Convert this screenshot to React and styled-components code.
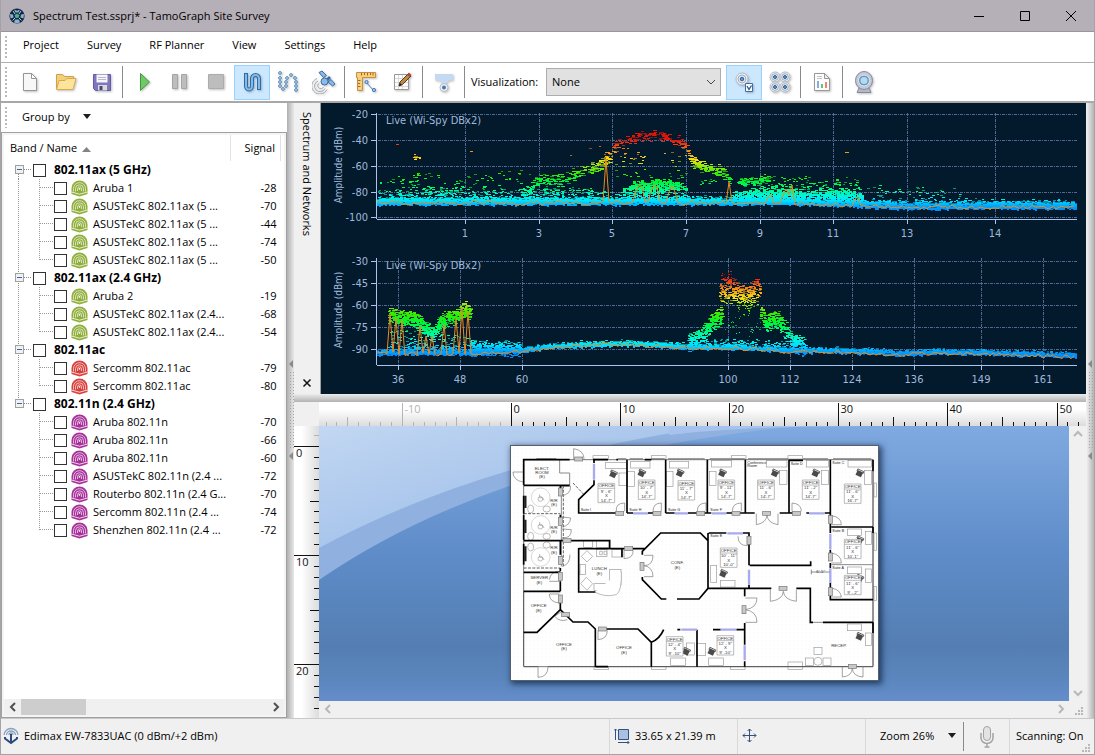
import React, { useState } from "react";
import styled, { createGlobalStyle, css } from "styled-components";

const networks = [
  {
    band: "802.11ax (5 GHz)",
    color: "#8fae3a",
    items: [
      ["Aruba 1", -28],
      ["ASUSTekC 802.11ax (5 ...", -70],
      ["ASUSTekC 802.11ax (5 ...", -44],
      ["ASUSTekC 802.11ax (5 ...", -74],
      ["ASUSTekC 802.11ax (5 ...", -50],
    ],
  },
  {
    band: "802.11ax (2.4 GHz)",
    color: "#8fae3a",
    items: [
      ["Aruba 2", -19],
      ["ASUSTekC 802.11ax (2.4...", -68],
      ["ASUSTekC 802.11ax (2.4...", -54],
    ],
  },
  {
    band: "802.11ac",
    color: "#d8403c",
    items: [
      ["Sercomm 802.11ac", -79],
      ["Sercomm 802.11ac", -80],
    ],
  },
  {
    band: "802.11n (2.4 GHz)",
    color: "#a8309a",
    items: [
      ["Aruba 802.11n", -70],
      ["Aruba 802.11n", -66],
      ["Aruba 802.11n", -60],
      ["ASUSTekC 802.11n (2.4 ...", -72],
      ["Routerbo 802.11n (2.4 G...", -70],
      ["Sercomm 802.11n (2.4 ...", -74],
      ["Shenzhen 802.11n (2.4 ...", -72],
    ],
  },
];

/* ---------- spectrum data ---------- */

const stops = [
  [-96, 0, 130, 245],
  [-91, 0, 165, 255],
  [-87, 0, 225, 255],
  [-83, 0, 245, 215],
  [-78, 0, 250, 130],
  [-72, 0, 245, 50],
  [-66, 50, 235, 0],
  [-60, 150, 230, 10],
  [-55, 250, 225, 20],
  [-49, 245, 150, 20],
  [-44, 240, 70, 20],
  [-40, 225, 20, 10],
  [-20, 225, 20, 10],
];

const dbmColor = (dbm) => {
  const v = Math.max(-96, Math.min(-21, dbm));
  const i = Math.max(1, stops.findIndex((s) => s[0] >= v));
  const a = stops[i - 1];
  const b = stops[i];
  const t = (v - a[0]) / (b[0] - a[0]);
  const c = [1, 2, 3].map((k) => Math.round(a[k] + (b[k] - a[k]) * t));
  return `rgb(${c.join(",")})`;
};

const makeRandom = (seed) => {
  let s = seed;
  return () => {
    s = (s * 16807) % 2147483647;
    return s / 2147483647;
  };
};

// y of a polyline [[x, y], ...] at x
const at = (pts, x) => {
  for (let i = 1; i < pts.length; i++) {
    if (x <= pts[i][0]) {
      const [x0, y0] = pts[i - 1];
      const [x1, y1] = pts[i];
      return y0 + ((y1 - y0) * (x - x0)) / (x1 - x0);
    }
  }
  return pts[pts.length - 1][1];
};

const buildDots = (chart) => {
  const rnd = makeRandom(chart.seed);
  const paths = {};
  const put = (x, y, w, dim) => {
    const key = `${Math.round(y)}|${dim ? 0.6 : 1}`;
    paths[key] = (paths[key] || "") + `M${Math.round(x)} ${Math.round(y)}h${w}v1h-${w}z`;
  };
  chart.clouds.forEach(({ pts, spread, count, w = 3, dim = 0.4 }) => {
    const x0 = pts[0][0];
    const x1 = pts[pts.length - 1][0];
    for (let i = 0; i < count; i++) {
      const x = x0 + rnd() * (x1 - x0);
      const y = at(pts, x) + (rnd() + rnd() - 1) * spread;
      put(x, y, rnd() > 0.6 ? w : w - 1, rnd() < dim);
    }
  });
  // areas get thinner towards their upper edge
  (chart.areas || []).forEach(({ top, bottom, density }) => {
    const x1 = top[top.length - 1][0];
    for (let x = top[0][0]; x < x1; x += 2) {
      const t = at(top, x) + (rnd() - 0.5) * 4;
      for (let y = t; y < bottom; y++) {
        if (rnd() < density) put(x, y, 3, rnd() < 0.15);
      }
    }
  });
  const { pts, thick } = chart.floor;
  for (let x = 56; x < 755; x += 2) {
    const mid = at(pts, x);
    const up = mid - thick - rnd() * 2;
    const low = mid + thick + rnd() * 2 - 1;
    for (let y = up; y < low; y++) put(x, y, 2, y < up + 1 || rnd() < 0.06);
  }
  return Object.entries(paths).map(([key, d]) => {
    const [y, opacity] = key.split("|");
    return { d, opacity, fill: dbmColor(chart.toDbm(Number(y))) };
  });
};

const buildTrace = (chart) => {
  const rnd = makeRandom(chart.seed + 5);
  let d = "";
  for (let x = 57; x < 755; x += 3) {
    const peak = chart.peaks.find((p) => Math.abs(p[0] - x) <= p[2]);
    let y = at(chart.floor.pts, x) + 1 + (rnd() - 0.5) * 4;
    if (peak) y = peak[1] + Math.abs(peak[0] - x) * 2;
    d += `${d ? "L" : "M"}${x} ${y.toFixed(1)}`;
  }
  return d;
};

const band24 = {
  seed: 4211,
  height: 145,
  toDbm: (y) => -20 - ((y - 11) * 80) / 103,
  top: 10,
  axis: 116,
  yTicks: [[-20, 11], [-40, 37], [-60, 63], [-80, 89], [-100, 114]],
  xTicks: [[1, 144], [3, 218], [5, 291], [7, 365], [9, 439], [11, 512], [13, 586], [14, 674]],
  floor: { pts: [[56, 99], [470, 99], [550, 102], [590, 103], [756, 103]], thick: 3 },
  peaks: [[285, 56, 2], [319, 80, 4], [334, 80, 4], [351, 83, 3], [408, 79, 2], [449, 90, 3], [465, 86, 3], [471, 82, 2], [536, 92, 3], [154, 95, 2]],
  clouds: [
    { pts: [[290, 45], [302, 39], [316, 33], [326, 32], [336, 32], [352, 36], [366, 42]], spread: 7, count: 150, w: 4 },
    { pts: [[283, 55], [290, 56]], spread: 8, count: 44 },
    { pts: [[210, 79], [236, 77], [252, 72], [269, 65], [283, 59]], spread: 8, count: 170, w: 4 },
    { pts: [[57, 80], [210, 76]], spread: 12, count: 80 },
    { pts: [[57, 91], [290, 91]], spread: 7, count: 330 },
    { pts: [[57, 95], [290, 95]], spread: 2, count: 300 },
    { pts: [[92, 53], [98, 56]], spread: 5, count: 9 },
    { pts: [[92, 74], [98, 76]], spread: 10, count: 12 },
    { pts: [[200, 88], [212, 88]], spread: 6, count: 40 },
    { pts: [[212, 88], [270, 86]], spread: 6, count: 40 },
    { pts: [[102, 86], [122, 90], [140, 88]], spread: 6, count: 40 },
    { pts: [[294, 55], [366, 56]], spread: 12, count: 30 },
    { pts: [[294, 72], [366, 72]], spread: 5, count: 20 },
    { pts: [[366, 52], [372, 59], [379, 63], [392, 65], [402, 70], [408, 77]], spread: 7, count: 160, w: 4 },
    { pts: [[378, 78], [410, 80]], spread: 5, count: 14 },
    { pts: [[416, 79], [447, 77]], spread: 5, count: 90, w: 4 },
    { pts: [[440, 78], [540, 84]], spread: 10, count: 90 },
    { pts: [[540, 87], [640, 92]], spread: 9, count: 50 },
    { pts: [[540, 98], [750, 99]], spread: 4, count: 220 },
    { pts: [[366, 96], [410, 97]], spread: 5, count: 100 },
    { pts: [[74, 41], [76, 41]], spread: 0, count: 2 },
    { pts: [[147, 48], [149, 48]], spread: 0, count: 2 },
    { pts: [[244, 54], [278, 42]], spread: 2, count: 3 },
    { pts: [[523, 49], [525, 49]], spread: 0, count: 2 },
  ],
  areas: [
    { top: [[294, 93], [302, 87], [309, 81], [319, 78], [327, 81], [332, 77], [346, 76], [356, 80], [366, 84]], bottom: 87, density: 0.85 },
    { top: [[290, 95], [302, 87], [326, 87], [346, 88], [366, 92]], bottom: 98, density: 0.5 },
    { top: [[408, 94], [414, 90], [446, 87], [469, 88], [496, 90], [512, 87], [536, 90], [544, 97]], bottom: 98, density: 0.8 },
    { top: [[410, 90], [446, 82], [469, 83], [496, 86], [512, 83], [536, 89]], bottom: 90, density: 0.35 },
  ],
};

const band5 = {
  seed: 977,
  height: 146,
  toDbm: (y) => -30 - ((y - 13) * 60) / 88,
  top: 10,
  axis: 117,
  yTicks: [[-30, 13], [-45, 35], [-60, 57], [-75, 79], [-90, 101]],
  xTicks: [[36, 77], [48, 139], [60, 201], [100, 407], [112, 469], [124, 531], [136, 593], [149, 660], [161, 722]],
  floor: {
    pts: [[56, 105], [150, 105], [201, 102], [236, 98], [289, 96], [316, 96], [366, 99], [412, 99], [469, 103], [516, 103], [582, 106], [617, 104], [659, 105], [756, 108]],
    thick: 2,
  },
  peaks: [[69, 66, 1], [75, 70, 1], [81, 72, 1], [99, 78, 1], [106, 86, 1], [111, 88, 1], [123, 76, 1], [135, 70, 1], [141, 60, 2], [147, 64, 1]],
  clouds: [
    { pts: [[67, 67], [79, 69], [96, 72], [102, 79], [111, 86], [117, 77], [126, 69], [136, 68], [142, 61], [149, 64]], spread: 9, count: 900, w: 3, dim: 0.2 },
    { pts: [[68, 92], [148, 92]], spread: 14, count: 130 },
    { pts: [[66, 101], [150, 101]], spread: 5, count: 160 },
    { pts: [[149, 100], [200, 101]], spread: 9, count: 460 },
    { pts: [[398, 47], [438, 47]], spread: 9, count: 210, dim: 0.5 },
    { pts: [[398, 39], [408, 34], [416, 40], [428, 44], [434, 34], [439, 40]], spread: 8, count: 150, w: 3 },
    { pts: [[400, 32], [412, 28]], spread: 9, count: 18, w: 2 },
    { pts: [[416, 58], [430, 54]], spread: 14, count: 70, w: 2 },
    { pts: [[392, 75], [440, 75]], spread: 26, count: 40, w: 2 },
    { pts: [[366, 97], [376, 90], [386, 82], [394, 70], [400, 68]], spread: 11, count: 400, w: 3, dim: 0.25 },
    { pts: [[439, 63], [444, 75], [456, 71], [466, 84], [472, 95], [484, 99]], spread: 11, count: 430, w: 3, dim: 0.25 },
    { pts: [[380, 96], [470, 97]], spread: 6, count: 190 },
    { pts: [[200, 100], [240, 96], [300, 94], [366, 97]], spread: 4, count: 160 },
    { pts: [[470, 100], [600, 103], [756, 105]], spread: 3, count: 260 },
  ],
};

[band24, band5].forEach((chart) => {
  chart.dots = buildDots(chart);
  chart.trace = buildTrace(chart);
});

function SpectrumChart({ chart }) {
  return (
    <ChartSvg viewBox={`0 0 765 ${chart.height}`}>
      <g stroke="#4f6a94" strokeDasharray="3 1 1 1" shapeRendering="crispEdges">
        {chart.yTicks.map(([v, y]) => (
          <line key={v} x1="57" x2="756" y1={y + 0.5} y2={y + 0.5} />
        ))}
        {chart.xTicks.map(([v, x]) => (
          <line key={v} x1={x + 0.5} x2={x + 0.5} y1={chart.top} y2={chart.axis} />
        ))}
      </g>
      <g stroke="#a9c4f0" shapeRendering="crispEdges">
        <line x1="55.5" x2="55.5" y1={chart.top} y2={chart.axis} />
        <line x1="56" x2="756" y1={chart.axis + 0.5} y2={chart.axis + 0.5} />
        {chart.yTicks.map(([v, y]) => (
          <line key={v} x1="50" x2="56" y1={y + 0.5} y2={y + 0.5} />
        ))}
        {chart.xTicks.map(([v, x]) => (
          <line key={v} x1={x + 0.5} x2={x + 0.5} y1={chart.axis} y2={chart.axis + 5} />
        ))}
      </g>
      <g shapeRendering="crispEdges">
        {chart.dots.map((p, i) => (
          <path key={i} d={p.d} fill={p.fill} opacity={p.opacity} />
        ))}
      </g>
      <path d={chart.trace} fill="none" stroke="#f08a1c" strokeWidth="1" />
      <ChartText x="65" y="21">Live (Wi-Spy DBx2)</ChartText>
      {chart.yTicks.map(([v, y]) => (
        <ChartText key={v} x="47" y={y + 4} textAnchor="end">{v}</ChartText>
      ))}
      {chart.xTicks.map(([v, x]) => (
        <ChartText key={v} x={x} y={chart.axis + 18} textAnchor="middle">{v}</ChartText>
      ))}
      <AxisTitle transform="translate(21 62) rotate(-90)">Amplitude (dBm)</AxisTitle>
    </ChartSvg>
  );
}

/* ---------- icons ---------- */

const Globe = () => (
  <svg width="16" height="16" viewBox="0 0 16 16">
    <circle cx="8" cy="8" r="7.6" fill="#14233f" />
    <path d="M5 1.5l3 1.3 3-1.3-1.4 3H6.4zM1 6l3 .5L4.6 9.5 1.5 10.5zM15 6l-3 .5-.6 3 3.100 1zM5 14.500l1-3h4l1 3-3 .8z" fill="#86b4d2" />
    <path d="M8 5.500l2.500 1.500-1 3h-3l-1-3z" fill="#4cae86" />
    <path d="M4 3l2 3M12 3l-2 3M3.500 12.500L6 10M12.500 12.500L10 10" stroke="#b7d2e6" />
  </svg>
);

const NewIcon = () => (
  <svg width="24" height="24" viewBox="0 0 24 24">
    <path d="M5.500 3.500h8l5 5v12h-13z" fill="#f7f7f7" stroke="#959595" />
    <path d="M13.500 3.500v5h5z" fill="#fff" stroke="#959595" />
  </svg>
);

const OpenIcon = () => (
  <svg width="24" height="24" viewBox="0 0 24 24">
    <path d="M2.500 19V4.500h6l2 2h9V11" fill="#f2cf7c" stroke="#d2a04a" />
    <path d="M2.500 19.500L5 10.500h6l2-2h9l-3 11z" fill="#fde49b" stroke="#d9a94f" />
  </svg>
);

const SaveIcon = () => (
  <svg width="24" height="24" viewBox="0 0 24 24">
    <path d="M3.500 4.500h17v16h-15l-2-2z" fill="#7f76bd" stroke="#655d9f" />
    <path d="M6.500 4.500h11v8h-11z" fill="#f5f5fa" />
    <path d="M8 7.500h8M8 9.500h8" stroke="#b9b9cc" />
    <path d="M8 15h9v5.500H8z" fill="#d9d9e2" />
    <path d="M9.500 16h3v4h-3z" fill="#4a4670" />
  </svg>
);

const PlayIcon = () => (
  <svg width="24" height="24" viewBox="0 0 24 24">
    <path d="M8.500 3.500l9 8.500-9 8.500z" fill="#6fca66" stroke="#43953d" />
  </svg>
);

const PauseIcon = () => (
  <svg width="24" height="24" viewBox="0 0 24 24">
    <path d="M4.500 4.500h5v14h-5zM13.500 4.500h5v14h-5z" fill="#bdbdbd" stroke="#a5a5a5" />
  </svg>
);

const StopIcon = () => (
  <svg width="24" height="24" viewBox="0 0 24 24">
    <path d="M4.500 4.500h15v14h-15z" fill="#bdbdbd" stroke="#acacac" />
  </svg>
);

const PathIcon = () => (
  <svg width="24" height="24" viewBox="0 0 24 24" fill="none">
    <path d="M6 3v13a3 3.500 0 0 0 6 0V8.500a3.500 3.500 0 0 1 7 0V20" stroke="#2f6aa5" strokeWidth="4" />
    <path d="M6 4v12a3 3.500 0 0 0 6 0V8.500a3.500 3.500 0 0 1 7 0V19" stroke="#86bae6" strokeWidth="2" />
  </svg>
);

const DotsIcon = () => (
  <svg width="24" height="24" viewBox="0 0 24 24" fill="#c3dbf2" stroke="#4c7fb3" strokeWidth=".9">
    {[[4, 3], [4, 8], [4, 12], [4, 16], [7, 19], [10, 16], [10, 12], [11, 8], [15, 5], [19, 8], [20, 12], [20, 16], [20, 20]].map(([x, y]) => (
      <circle key={`${x}-${y}`} cx={x} cy={y} r="1.400" />
    ))}
  </svg>
);

const SatelliteIcon = () => (
  <svg width="24" height="24" viewBox="0 0 24 24" fill="none">
    <g stroke="#a4a9ae">
      <path d="M5 8.500a8 8 0 1 0 10 11" />
      <path d="M6 11a5.500 5.500 0 1 0 7 7.500" />
      <path d="M7.500 13a3 3 0 1 0 4 4" />
    </g>
    <path d="M7 2.500l3-1.500 4.500 4.500-3 2zM16 12l3-2.500 4 4.500-2.500 2z" fill="#8db8e2" stroke="#3b6ea5" />
    <path d="M11 14l7-7" stroke="#3b6ea5" strokeWidth="3" />
    <circle cx="12.500" cy="11.500" r="3.500" fill="#8bbce9" stroke="#3b6ea5" />
  </svg>
);

const RulerIcon = () => (
  <svg width="24" height="24" viewBox="0 0 24 24" fill="none">
    <path d="M2.500 2.500h19v5h-13v13h-5v-13h-1z" fill="#f7cf7d" stroke="#c79040" />
    <path d="M7.500 3v2.500M10.500 3v2M13.500 3v2.500M16.500 3v2M19 3v2.500M4 10.500h2.500M4 13.500h2M4 16.500h2.500" stroke="#9a6a28" />
    <path d="M12.500 12.500l7 8" stroke="#4a7fb8" />
    <circle cx="12.500" cy="12" r="1.600" fill="#a9cdf0" stroke="#3f76b0" />
    <circle cx="20" cy="20" r="1.600" fill="#a9cdf0" stroke="#3f76b0" />
  </svg>
);

const EditIcon = () => (
  <svg width="24" height="24" viewBox="0 0 24 24">
    <path d="M4.500 4.500h14v15h-14z" fill="#fff" stroke="#9a9a9a" />
    <path d="M5 8.500h13M5 12.500h13M5 16.500h13M8.500 5v14M12.500 5v14" stroke="#d8d8d8" />
    <path d="M9 16l1-4 8.500-8.500 2.500 2.500-8.500 8.500z" fill="#c08a45" stroke="#5b3a1e" />
    <path d="M17 5l2-2.500 2.500 2.500-2 2z" fill="#a8503a" />
    <path d="M9 16l1-3 2 2z" fill="#222" />
  </svg>
);

const ProbeIcon = () => (
  <svg width="24" height="24" viewBox="0 0 24 24">
    <path d="M3 4h18v6.500h-4L12 15.500 7 10.500H3z" fill="#c4daf4" />
    <circle cx="12" cy="17.500" r="4" fill="#eef0f3" stroke="#b5bcc6" />
    <circle cx="12" cy="17.500" r="2" fill="#4c78aa" />
  </svg>
);

const Rings = ({ x, y, r }) => (
  <g fill="none">
    <circle cx={x} cy={y} r={r} stroke="#b3bbc4" fill="#eef1f5" />
    <circle cx={x} cy={y} r={r * 0.66} stroke="#9aabbd" />
    <circle cx={x} cy={y} r={r * 0.3} fill="#5e93c8" stroke="#2f5f95" />
  </g>
);

const ApCheckIcon = () => (
  <svg width="24" height="24" viewBox="0 0 24 24">
    <Rings x={10} y={9} r={6} />
    <path d="M13.500 13.500h7v8h-7z" fill="#fff" stroke="#3f6ea6" />
    <path d="M15 16l2 3.500 2.500-4" fill="none" stroke="#2e5f9a" strokeWidth="1.400" />
  </svg>
);

const ApGridIcon = () => (
  <svg width="24" height="24" viewBox="0 0 24 24">
    <Rings x={7} y={7} r={5} />
    <Rings x={17} y={7} r={5} />
    <Rings x={7} y={17} r={5} />
    <Rings x={17} y={17} r={5} />
  </svg>
);

const ReportIcon = () => (
  <svg width="24" height="24" viewBox="0 0 24 24">
    <path d="M4.500 3.500h10l5 5v12h-15z" fill="#fcfcfc" stroke="#989898" />
    <path d="M14.500 3.500v5h5z" fill="#eee" stroke="#989898" />
    <path d="M7 6.500h5M7 8.500h5" stroke="#c4c4c4" />
    <path d="M7 11h2v7H7z" fill="#7fb0e0" />
    <path d="M11 14h2v4h-2z" fill="#6cc06c" />
    <path d="M15 12h2v6h-2z" fill="#ec8080" />
  </svg>
);

const CameraIcon = () => (
  <svg width="24" height="24" viewBox="0 0 24 24">
    <path d="M7 18h10l2 4.500H5z" fill="#b5bac6" stroke="#858b9c" />
    <ellipse cx="12" cy="10.500" rx="8.500" ry="9" fill="#c3c9da" stroke="#858b9c" />
    <circle cx="12" cy="10.500" r="5.500" fill="#7d92b8" stroke="#e4e8f0" />
    <circle cx="12" cy="10.500" r="3.500" fill="#a5e0f5" />
  </svg>
);

const ApIcon = ({ color }) => (
  <svg width="17" height="17" viewBox="0 0 17 17" fill="none">
    <path d="M0.500 14V8a8 7.500 0 0 1 16 0v6l-8 2.500z" fill={color} />
    <path
      d="M2.500 11.500V8.500a6 5.800 0 0 1 12 0v3M4.500 11.500V8.700a4 3.900 0 0 1 8 0v2.800M6.500 11V8.800a2 2 0 0 1 4 0V11"
      stroke="#fff"
      strokeOpacity=".8"
      strokeWidth=".8"
    />
    <path d="M0.500 12l8 2.200 8-2.200" stroke="#fff" strokeWidth=".8" />
    <circle cx="8.500" cy="8.800" r=".9" fill="#fff" />
  </svg>
);

const Chevron = ({ dir, color = "#505050" }) => {
  const d = {
    left: "M8 2L4 6l4 4",
    right: "M4 2l4 4-4 4",
    up: "M2 8l4-4 4 4",
    down: "M2 4l4 4 4-4",
  }[dir];
  return (
    <svg width="12" height="12" viewBox="0 0 12 12">
      <path d={d} fill="none" stroke={color} strokeWidth="2" />
    </svg>
  );
};

const Caret = () => (
  <svg width="8" height="5" viewBox="0 0 8 5">
    <path d="M0 0h8L4 5z" fill="#1e1e1e" />
  </svg>
);

const SizeGrip = () => (
  <svg width="9" height="9" viewBox="0 0 9 9" fill="#b8b8b8">
    <path d="M6 0h2v2H6zM3 3h2v2H3zM6 3h2v2H6zM0 6h2v2H0zM3 6h2v2H3zM6 6h2v2H6z" />
  </svg>
);

const AdapterIcon = () => (
  <svg width="16" height="18" viewBox="0 0 16 18" fill="none">
    <path d="M1 8a7 6.500 0 0 1 14 0M3.500 8a4.500 4 0 0 1 9 0M6 8a2 2 0 0 1 4 0" stroke="#8ba3c0" strokeWidth="1.300" />
    <path d="M8 7v9" stroke="#2c4a7c" strokeWidth="2" />
    <path d="M2 10v1.500L8 16l6-4.500V10" stroke="#2c4a7c" strokeWidth="2" />
  </svg>
);

const AreaIcon = () => (
  <svg width="16" height="16" viewBox="0 0 16 16" fill="none" stroke="#35507e">
    <path d="M4.500 1.500h10v10h-10z" fill="#a8c1e2" />
    <path d="M1.500 1v11M0 2.500L1.500 1 3 2.500M4 14.500h11M13.500 13l1.500 1.500-1.500 1.500" />
  </svg>
);

const MoveIcon = () => (
  <svg width="15" height="15" viewBox="0 0 15 15" fill="none" stroke="#35507e">
    <path d="M7.500 1v13M1 7.500h13M5.500 3l2-2 2 2M5.500 12l2 2 2-2M3 5.500l-2 2 2 2M12 5.500l2 2-2 2" />
  </svg>
);

const MicIcon = () => (
  <svg width="16" height="24" viewBox="0 0 16 24" fill="none" stroke="#a3a3a3">
    <rect x="4.500" y="1.500" width="7" height="14" rx="3.500" fill="#e3e3e3" />
    <path d="M2 8v5a6 5.500 0 0 0 12 0V8M8 18.500V22M5.500 22h5" strokeWidth="1.500" />
  </svg>
);

/* ---------- tree ---------- */

const GroupLines = ({ first, last }) => (
  <svg width="22" height="18" viewBox="0 0 22 18" shapeRendering="crispEdges">
    <path
      d={`M7.500 ${first ? 9 : 0}V${last ? 9 : 18}M13 8.500H21`}
      stroke="#8c8c8c"
      strokeDasharray="1 1"
      fill="none"
    />
    <rect x="4.500" y="4.500" width="8" height="8" fill="#f1f1f1" stroke="#a0a0a0" />
    <path d="M6 8.500h5" stroke="#3a67b0" />
  </svg>
);

const ItemLines = ({ lastGroup, last }) => (
  <svg width="43" height="18" viewBox="0 0 43 18" shapeRendering="crispEdges">
    <path
      d={`${lastGroup ? "" : "M7.500 0V18"}M28.500 0V${last ? 9 : 18}M29 8.500H42`}
      stroke="#9a9a9a"
      strokeDasharray="1 1"
      fill="none"
    />
  </svg>
);

function NetworkTable() {
  return (
    <Table>
      <thead>
        <tr>
          <NameHead scope="col">
            Band / Name{" "}
            <svg width="9" height="5" viewBox="0 0 9 5">
              <path d="M0 5h9L4.500 0z" fill="#848484" />
            </svg>
          </NameHead>
          <SignalHead scope="col">Signal</SignalHead>
        </tr>
      </thead>
      <tbody>
        {networks.map((group, g) => {
          const lastGroup = g === networks.length - 1;
          return (
            <React.Fragment key={group.band}>
              <tr>
                <Cell colSpan="2">
                  <Entry>
                    <GroupLines first={g === 0} last={lastGroup} />
                    <Tick type="checkbox" />
                    <BandName>{group.band}</BandName>
                  </Entry>
                </Cell>
              </tr>
              {group.items.map(([name, signal], i) => (
                <tr key={i}>
                  <Cell>
                    <Entry>
                      <ItemLines lastGroup={lastGroup} last={i === group.items.length - 1} />
                      <Tick type="checkbox" />
                      <IconSlot>
                        <ApIcon color={group.color} />
                      </IconSlot>
                      {name}
                    </Entry>
                  </Cell>
                  <SignalCell>{signal}</SignalCell>
                </tr>
              ))}
            </React.Fragment>
          );
        })}
      </tbody>
    </Table>
  );
}

/* ---------- rulers and plan ---------- */

const METRE = 10.91;

function TopRuler() {
  const ticks = [];
  for (let m = -17; m <= 52; m++) ticks.push(m);
  return (
    <RulerSvg viewBox="0 0 767 24" preserveAspectRatio="xMinYMin slice">
      {ticks.map((m) => {
        const x = Math.round(192 + m * METRE) + 0.5;
        const y = m % 10 === 0 ? 1 : m % 5 === 0 ? 15 : 20;
        return (
          <g key={m}>
            <line x1={x} x2={x} y1={y} y2="24" stroke={m < 0 ? "#b4b4b4" : "#111"} />
            {m % 10 === 0 && (
              <RulerText x={x + 2} y="11" $faint={m < 0}>{m}</RulerText>
            )}
          </g>
        );
      })}
    </RulerSvg>
  );
}

function SideRuler() {
  const ticks = [];
  for (let m = -1; m <= 24; m++) ticks.push(m);
  return (
    <svg width="25" height="291" viewBox="0 0 25 291">
      {ticks.map((m) => {
        const y = Math.round(20 + m * METRE) + 0.5;
        const x = m % 10 === 0 ? 0 : m % 5 === 0 ? 16 : 20;
        return (
          <g key={m}>
            <line x1={x} x2="25" y1={y} y2={y} stroke={m < 0 ? "#b4b4b4" : "#111"} />
            {m % 10 === 0 && <RulerText x="2" y={y + 10}>{m}</RulerText>}
          </g>
        );
      })}
    </svg>
  );
}

const walls = [
  "M57 135V60H195M57 137H195",
  "M57 303H222M57 398H167M57 455H167M167 137V160M167 225V240M167 300V345M167 385V395M167 425V455M167 480V510L97 578H57",
  "M57 168V222M57 225V300M57 312V375",
  "M167 510L205 547H250L272 568V681M272 681H310M305 568H400L440 608V681M440 608Q465 598 477 570",
  "M222 303H315V327M222 325V457H272M222 327H360M385 327H420M352 327V353",
  "M413 345V335L468 280H587L610 303M610 280V446L583 478H517M485 478H470L413 420V412",
  "M268 60V70M268 122V135L222 180V220H335M367 60V220M367 220H385M430 220H450M483 60V220M483 220H510M550 220H608V60",
  "M265 60H310M335 60H340M420 60H440M608 220H620M665 220H685M705 220H750M722 60V220M825 220H853V60M853 62H895M853 220H865M905 220H913M960 220H977M977 60V230M977 253V280M980 262H1105",
  "M612 280H665M715 280H733V290M733 312V377M735 377H918V365M733 435V446H612M733 446H800M875 446H917V548H925M955 548H1105",
  "M977 330V340M977 370V385M977 430V445M977 468V480H1105M1105 262V280M1105 60V95M1105 548V580",
  "M720 446V470M720 550V615M720 665V681M625 570H648M695 570H720M577 570V681M518 570H527",
];

const doors = [
  "M207 60V27Q238 32 238 58M55 127Q25 122 25 97H55M170 168Q198 165 198 140H170M172 232L198 235Q196 258 172 262M172 294Q200 298 200 270L172 268",
  "M134 420Q138 395 165 395M134 425H165M165 490Q134 488 134 463H165M172 380Q196 375 196 345M172 515L150 530Q165 548 188 540",
  "M335 215Q332 190 360 190V215M445 215Q445 190 470 190V215M385 330Q388 356 358 357V330",
  "M418 347H445Q445 378 418 378Q445 382 445 411H418M280 572V600Q308 598 308 572M100 681V713Q130 712 130 681",
  "M578 215Q578 190 604 190V215M683 215Q683 190 710 190V215M755 222V255Q786 250 787 225Q788 250 820 255V222M862 190V215M862 190Q890 192 890 215",
  "M980 228Q1010 232 1010 255H980M980 340Q1010 345 1010 370H980M980 445Q1008 450 1010 472H980M700 290Q700 318 728 318V290",
  "M797 450V485Q835 480 836 455Q838 480 875 485V450M722 475H757Q757 505 722 510Q757 515 757 548H722M1013 681V712Q1042 710 1043 685Q1044 710 1075 712V681",
];

const windows = "M95 57H155M340 57H365M375 57H415M440 57H480M490 57H600M615 57H720M730 57H850M895 57H970M985 57H1100M57 455V680M57 681H100M130 681H1105M1105 95V680M720 446V470M980 375H1105M925 548H955M165 60V100H195V137M170 137V380";

const desks = [
  [302, 68, 64, 18], [343, 100, 22, 38], [378, 65, 58, 20], [369, 95, 20, 45], [494, 65, 58, 20], [485, 95, 20, 45],
  [620, 62, 60, 20], [614, 95, 20, 42], [785, 62, 62, 20], [825, 92, 22, 42], [905, 62, 66, 20], [950, 92, 22, 42],
  [1030, 62, 70, 20], [1080, 92, 20, 42], [1028, 268, 42, 20], [1083, 275, 18, 40], [1028, 382, 42, 20], [1083, 388, 18, 40],
  [618, 378, 18, 50], [647, 422, 44, 20], [498, 655, 44, 22], [545, 610, 24, 36], [612, 655, 44, 22], [575, 612, 28, 36],
  [1028, 553, 42, 20], [1083, 580, 18, 38], [265, 48, 46, 10], [440, 48, 44, 10], [680, 48, 44, 10], [850, 48, 44, 10],
  [268, 680, 44, 10], [440, 680, 44, 10], [677, 680, 44, 10], [850, 667, 44, 22], [1108, 130, 8, 42], [1108, 280, 8, 52],
  [1108, 440, 8, 42], [928, 623, 24, 22], [902, 655, 24, 22], [955, 655, 24, 22], [275, 330, 32, 20], [322, 330, 28, 22],
  [226, 375, 16, 30], [237, 303, 26, 20], [275, 303, 38, 20], [315, 390, 34, 46], [268, 432, 50, 20],
];

const chairs = [
  [325, 105], [410, 102], [525, 102], [652, 102], [810, 102], [932, 102], [1064, 102],
  [1064, 303], [1064, 418], [655, 403], [544, 637], [620, 637], [1064, 592],
];

const officeTags = [
  [305, 160, "9' - 6\"", "14'-7\""],
  [426, 150, "10' - 7\"", "14'-7\""],
  [545, 152, "11' - 7\"", "14'-7\""],
  [665, 150, "9' - 11\"", "14'-7\""],
  [784, 150, "11' - 6\"", "14'-7\""],
  [918, 150, "11' - 2\"", "14'-7\""],
  [1044, 162, "11' - 6\"", "16'-7\""],
  [1044, 328, "11' - 6\"", "10'-1\""],
  [1044, 436, "11' - 6\"", "9' - 2\""],
  [672, 354, "10' - 11\"", "10'-0\""],
  [510, 620, "12' - 4\"", "9' -10\""],
  [662, 617, "12' - 9\"", "9' -10\""],
];

const roomNames = [
  [112, 90, "ELECT.", "ROOM"], [104, 418, "SERVER", "(E)"], [102, 503, "OFFICE", "(E)"], [178, 618, "OFFICE", "(E)"],
  [358, 628, "OFFICE", "(E)"], [284, 391, "LUNCH", "(E)"], [518, 373, "CONF.", "(E)"], [148, 186, "R/R", "(E)"],
  [148, 267, "R/R", "(E)"], [148, 329, "R/R", "(E)"], [1003, 622, "RECEP.", ""],
];

const suiteNames = [
  [228, 214, "Suite I"], [374, 214, "Suite H"], [490, 214, "Suite G"], [617, 214, "Suite F"], [728, 73, "Conference"],
  [728, 83, "Room"], [858, 77, "Suite D"], [983, 73, "Suite C"], [983, 276, "Suite B"], [983, 389, "Suite A"], [617, 292, "Suite E"],
];

const doorTags = [
  [222, 58], [345, 221], [457, 221], [588, 221], [694, 221], [786, 221], [875, 221], [977, 240, 1], [977, 352, 1], [977, 456, 1],
  [733, 302, 1], [835, 446], [718, 510, 1], [1043, 681], [372, 327], [412, 380, 1], [167, 157, 1], [167, 245, 1], [187, 303], [167, 362, 1],
  [167, 410, 1], [167, 478, 1], [293, 568], [183, 525],
];

function FloorPlan() {
  return (
    <PlanSvg viewBox="16 16 1107 708">
      <defs>
        <pattern id="dots" width="12" height="12" patternUnits="userSpaceOnUse">
          <rect x="2" y="2" width="3" height="3" fill="#f0f0f0" />
        </pattern>
      </defs>
      <rect x="16" y="16" width="1107" height="708" fill="#fff" />
      <rect x="16" y="16" width="1107" height="708" fill="url(#dots)" />
      <g fill="#fff" stroke="#9a9a9a" strokeWidth="2">
        {desks.map(([x, y, w, h]) => (
          <rect key={`${x}-${y}`} x={x} y={y} width={w} height={h} />
        ))}
        <g stroke="#c4c4c4">
          <circle cx="108" cy="173" r="28" />
          <circle cx="108" cy="256" r="28" />
          <circle cx="108" cy="352" r="28" />
        </g>
        <circle cx="940" cy="665" r="12" />
        <ellipse cx="126" cy="208" rx="11" ry="9" />
        <ellipse cx="126" cy="290" rx="11" ry="9" />
        <ellipse cx="126" cy="316" rx="11" ry="9" />
        <ellipse cx="78" cy="208" rx="9" ry="12" />
        <ellipse cx="78" cy="290" rx="9" ry="12" />
        <ellipse cx="78" cy="322" rx="9" ry="12" />
        <path d="M230 350L247 333 264 350 247 367zM228 432L245 413 264 432 247 452zM270 457Q300 474 335 465Q352 455 350 395" />
        <path d="M285 335h8v10h-8zM298 335h8v10h-8z" />
      </g>
      <path d={windows} fill="none" stroke="#8a8a8a" strokeWidth="3" />
      <path d="M57 222H167M57 385H167M176 137V380M205 130L238 165" fill="none" stroke="#666" strokeWidth="3" strokeDasharray="9 4" />
      <path d="M57 60H1105V681M57 681H1105M57 137V680M57 60V137" fill="none" stroke="#333" strokeWidth="2" />
      <path d={doors.join("")} fill="none" stroke="#777" strokeWidth="2" />
      <path d={walls.join("")} fill="none" stroke="#000" strokeWidth="5" />
      <path d="M268 72V120M385 221H430M510 221H550M622 221H665M913 221H960M668 281H715M733 390V435M977 282V328M977 386V430M648 570H695M720 617V662M530 570H577" stroke="#a9a9ee" strokeWidth="7" />
      <path d="M62 168V205M62 240V280M62 320V365" stroke="#222" strokeWidth="7" />
      <path d="M920 397H975M920 390V404" stroke="#555" strokeWidth="2" />
      {chairs.map(([x, y]) => (
        <g key={`${x}-${y}`} transform={`translate(${x} ${y}) rotate(25)`}>
          <rect x="-9" y="-8" width="18" height="16" fill="#4a4a4a" />
          <path d="M-10 -4V-11H10V-4" fill="none" stroke="#333" strokeWidth="2" />
        </g>
      ))}
      {doorTags.map(([x, y, tall]) => (
        <rect
          key={`${x}-${y}`}
          x={x - (tall ? 6 : 12)}
          y={y - (tall ? 12 : 6)}
          width={tall ? 12 : 24}
          height={tall ? 24 : 12}
          fill="#c8c8c8"
          stroke="#777"
          strokeWidth="2"
        />
      ))}
      {officeTags.map(([x, y, w, d]) => (
        <g key={`${x}-${y}`}>
          <path d={`M${x - 25} ${y - 29}h50v58h-50zM${x - 25} ${y - 14}h50`} fill="#fff" stroke="#999" strokeWidth="2" />
          <PlanText x={x} y={y - 17}>OFFICE</PlanText>
          <PlanText x={x} y={y - 1}>{w}</PlanText>
          <PlanText x={x} y={y + 12}>X</PlanText>
          <PlanText x={x} y={y + 26}>{d}</PlanText>
        </g>
      ))}
      {roomNames.map(([x, y, a, b]) => (
        <g key={`${x}-${y}`}>
          <PlanText x={x} y={y}>{a}</PlanText>
          <PlanText x={x} y={y + 14}>{b}</PlanText>
        </g>
      ))}
      <PlanText x="112" y="116">(E)</PlanText>
      {[178, 261, 357].map((y) => (
        <g key={y} fill="none" stroke="#999" strokeWidth="2">
          <path d={`M105 ${y - 14}v10h9l4 8`} />
          <circle cx="107" cy={y} r="7" />
        </g>
      ))}
      <PlanText x="948" y="401">6'-5"</PlanText>
      {suiteNames.map(([x, y, s]) => (
        <SuiteText key={s} x={x} y={y}>{s}</SuiteText>
      ))}
    </PlanSvg>
  );
}

const Backdrop = () => (
  <BackdropSvg viewBox="0 0 750 275" preserveAspectRatio="none">
    <defs>
      <linearGradient id="sky" x1="0" y1="0" x2="0" y2="1">
        <stop offset="0" stopColor="#7fa9e0" />
        <stop offset=".45" stopColor="#5f8dc9" />
        <stop offset=".8" stopColor="#547eb3" />
        <stop offset=".92" stopColor="#5b86bd" />
        <stop offset="1" stopColor="#648dcb" />
      </linearGradient>
      <linearGradient id="hazeA" x1="0" y1="0" x2="1" y2="1">
        <stop offset="0" stopColor="#c2d7f2" />
        <stop offset="1" stopColor="#8fb4e6" />
      </linearGradient>
    </defs>
    <rect width="750" height="275" fill="url(#sky)" />
    <path d="M0 0H480Q180 30 0 154z" fill="#90b1e0" />
    <path d="M0 0H395Q160 35 0 122z" fill="url(#hazeA)" />
    <path d="M350 9Q420 0 560 0H350z" fill="#a5c3ee" />
  </BackdropSvg>
);

/* ---------- window ---------- */

export default function App() {
  const [mode, setMode] = useState("path");
  const [visualization, setVisualization] = useState("None");

  return (
    <Window>
      <GlobalStyle />
      <TitleBar>
        <Globe />
        <Title>Spectrum Test.ssprj* - TamoGraph Site Survey</Title>
        <CaptionButton aria-label="Minimize">
          <svg width="12" height="12"><path d="M1 6.500h10" stroke="#000" /></svg>
        </CaptionButton>
        <CaptionButton aria-label="Maximize">
          <svg width="12" height="12"><path d="M1.500 1.500h9v9h-9z" fill="none" stroke="#000" /></svg>
        </CaptionButton>
        <CaptionButton aria-label="Close">
          <svg width="12" height="12"><path d="M1 1l10 10M11 1L1 11" stroke="#000" /></svg>
        </CaptionButton>
      </TitleBar>

      <MenuBar>
        <Grip $tight />
        {["Project", "Survey", "RF Planner", "View", "Settings", "Help"].map((m) => (
          <MenuItem key={m}>{m}</MenuItem>
        ))}
      </MenuBar>

      <ToolBar>
        <Grip />
        <ToolButton aria-label="New"><NewIcon /></ToolButton>
        <ToolButton aria-label="Open"><OpenIcon /></ToolButton>
        <ToolButton aria-label="Save"><SaveIcon /></ToolButton>
        <Divider />
        <ToolButton aria-label="Start"><PlayIcon /></ToolButton>
        <ToolButton aria-label="Pause"><PauseIcon /></ToolButton>
        <ToolButton aria-label="Stop"><StopIcon /></ToolButton>
        <ToolButton aria-label="Continuous" $active={mode === "path"} onClick={() => setMode("path")}><PathIcon /></ToolButton>
        <ToolButton aria-label="Point by point" $active={mode === "dots"} onClick={() => setMode("dots")}><DotsIcon /></ToolButton>
        <ToolButton aria-label="GPS" $active={mode === "gps"} onClick={() => setMode("gps")}><SatelliteIcon /></ToolButton>
        <Divider />
        <ToolButton aria-label="Calibrate"><RulerIcon /></ToolButton>
        <ToolButton aria-label="Edit"><EditIcon /></ToolButton>
        <Divider />
        <ToolButton aria-label="Probe"><ProbeIcon /></ToolButton>
        <Divider />
        <ToolLabel htmlFor="visualization">Visualization:</ToolLabel>
        <SelectBox>
          <Select id="visualization" value={visualization} onChange={(e) => setVisualization(e.target.value)}>
            <option>None</option>
          </Select>
          <SelectArrow width="10" height="6" viewBox="0 0 10 6">
            <path d="M1 1l4 4 4-4" fill="none" stroke="#444" />
          </SelectArrow>
        </SelectBox>
        <ToolButton aria-label="Selected APs" $active><ApCheckIcon /></ToolButton>
        <ToolButton aria-label="All APs"><ApGridIcon /></ToolButton>
        <Divider />
        <ToolButton aria-label="Report"><ReportIcon /></ToolButton>
        <Divider />
        <ToolButton aria-label="Camera"><CameraIcon /></ToolButton>
      </ToolBar>

      <Body>
        <Sidebar>
          <GroupBar>
            <Grip />
            <GroupButton>
              Group by <Caret />
            </GroupButton>
          </GroupBar>
          <ListPanel>
            <NetworkTable />
            <Spacer />
            <ListScroll>
              <ScrollButton aria-label="Scroll left"><Chevron dir="left" /></ScrollButton>
              <Thumb />
              <Spacer />
              <ScrollButton aria-label="Scroll right"><Chevron dir="right" /></ScrollButton>
            </ListScroll>
          </ListPanel>
        </Sidebar>

        <Splitter>
          <SplitHandle>
            <SplitDots />
          </SplitHandle>
        </Splitter>

        <Content>
          <SpectrumRow>
            <SideTab>
              <SideTabTitle>Spectrum and Networks</SideTabTitle>
              <SideTabClose aria-label="Close panel">
                <svg width="10" height="10"><path d="M1.500 1.500l7 7M8.500 1.500l-7 7" stroke="#111" strokeWidth="1.500" /></svg>
              </SideTabClose>
            </SideTab>
            <Charts>
              <SpectrumChart chart={band24} />
              <SpectrumChart chart={band5} />
            </Charts>
          </SpectrumRow>
          <RowSplitter />
          <RulerRow>
            <RulerCorner />
            <TopRuler />
          </RulerRow>
          <MapRow>
            <SideRulerBox>
              <SideRuler />
            </SideRulerBox>
            <MapColumn>
              <MapView>
                <Canvas>
                  <Backdrop />
                  <FloorPlan />
                </Canvas>
                <MapScrollY>
                  <ScrollButton aria-label="Scroll up"><Chevron dir="up" color="#b8b8b8" /></ScrollButton>
                  <Spacer />
                  <ScrollButton aria-label="Scroll down"><Chevron dir="down" color="#b8b8b8" /></ScrollButton>
                </MapScrollY>
              </MapView>
              <MapScrollX>
                <ScrollButton aria-label="Scroll map left"><Chevron dir="left" color="#b8b8b8" /></ScrollButton>
                <Spacer />
                <ScrollButton aria-label="Scroll map right"><Chevron dir="right" color="#b8b8b8" /></ScrollButton>
                <ScrollCorner>
                  <SizeGrip />
                </ScrollCorner>
              </MapScrollX>
            </MapColumn>
          </MapRow>
        </Content>

        <Splitter $right>
          <SplitHandle>
            <SplitDots />
          </SplitHandle>
        </Splitter>
      </Body>

      <StatusBar>
        <StatusItem $grow>
          <AdapterIcon />
          Edimax EW-7833UAC (0 dBm/+2 dBm)
        </StatusItem>
        <StatusItem $width={128}>
          <AreaIcon />
          33.65 x 21.39 m
        </StatusItem>
        <StatusItem $width={128}>
          <MoveIcon />
        </StatusItem>
        <ZoomItem>
          <ZoomButton>
            Zoom 26% <Caret />
          </ZoomButton>
        </ZoomItem>
        <MicItem>
          <MicIcon />
        </MicItem>
        <StatusItem $width={85}>
          Scanning: On
          <GripCorner>
            <SizeGrip />
          </GripCorner>
        </StatusItem>
      </StatusBar>
    </Window>
  );
}

const GlobalStyle = createGlobalStyle`
  * {
    box-sizing: border-box;
  }
  body {
    margin: 0;
    color: #000;
    font: 11px/16px "Open Sans", "Noto Sans", sans-serif;
  }
  button, select, input {
    font: inherit;
    color: inherit;
    margin: 0;
  }
  button {
    border: 0;
    padding: 0;
    background: none;
  }
  svg {
    display: block;
    flex: none;
  }
`;

const Window = styled.div`
  display: flex;
  flex-direction: column;
  min-height: 100vh;
  border: 1px solid #a6a2a8;
  border-top: 0;
  background: #f0f0f0;
`;

const TitleBar = styled.header`
  display: flex;
  align-items: center;
  height: 32px;
  padding-left: 8px;
  background: #b5afb7;
  border-bottom: 1px solid #9a959b;
`;
const Title = styled.h1`
  flex: 1;
  margin: 0 8px;
  font-size: 11px;
  font-weight: 400;
`;
const CaptionButton = styled.button`
  display: grid;
  place-items: center;
  width: 46px;
  height: 30px;
`;

const Grip = styled.span`
  align-self: stretch;
  width: 2px;
  margin: 4px ${(props) => (props.$tight ? 2 : 5)}px 4px 4px;
  background: repeating-linear-gradient(#b9b9b9 0 2px, transparent 2px 4px);
`;

const MenuBar = styled.nav`
  display: flex;
  height: 31px;
  background: #fff;
  border-bottom: 1px solid #b0b0b0;
`;
const MenuItem = styled.button`
  padding: 0 14px 4px;
`;

const ToolBar = styled.div`
  display: flex;
  align-items: center;
  height: 40px;
  background: #fff;
  border-bottom: 2px solid #a8a8a8;
`;
const ToolButton = styled.button`
  display: grid;
  place-items: center;
  width: 36px;
  height: 35px;
  border: 1px solid transparent;
  svg {
    filter: drop-shadow(1px 1px 1px rgba(0, 0, 0, 0.25));
  }
  ${(props) =>
    props.$active &&
    css`
      background: #cce8ff;
      border-color: #99d1ff;
    `}
`;
const Divider = styled.span`
  width: 1px;
  height: 32px;
  margin: 0 3px 0 2px;
  background: #8a8a8a;
`;
const ToolLabel = styled.label`
  width: 75px;
  padding: 0 3px;
`;
const SelectBox = styled.div`
  display: grid;
  align-items: center;
  width: 175px;
  margin: 0 5px 0 3px;
`;
const Select = styled.select`
  grid-area: 1 / 1;
  appearance: none;
  height: 28px;
  padding: 0 5px;
  background: #e1e1e1;
  border: 1px solid #adadad;
  border-radius: 0;
`;
const SelectArrow = styled.svg`
  grid-area: 1 / 1;
  justify-self: end;
  margin-right: 5px;
  pointer-events: none;
`;

const Body = styled.main`
  display: flex;
  flex: 1;
`;
const Sidebar = styled.aside`
  display: flex;
  flex-direction: column;
  width: 286px;
  background: #fff;
`;
const GroupBar = styled.div`
  display: flex;
  height: 29px;
`;
const GroupButton = styled.button`
  display: flex;
  align-items: center;
  gap: 13px;
  padding: 0 10px 2px;
`;
const ListPanel = styled.section`
  display: flex;
  flex-direction: column;
  flex: 1;
  border: 1px solid #a0a0a0;
  box-shadow: inset 0 0 0 2px #f4f4f4;
  padding: 2px;
`;
const Table = styled.table`
  margin-right: 3px;
  border-collapse: collapse;
`;
const NameHead = styled.th`
  height: 26px;
  padding: 0 6px;
  font-weight: 400;
  text-align: left;
  border-right: 1px solid #e2e2e2;
  svg {
    display: inline-block;
    margin-left: 2px;
  }
`;
const SignalHead = styled.th`
  width: 50px;
  padding: 0 5px 0 0;
  font-weight: 400;
  text-align: right;
  border-right: 1px solid #e2e2e2;
`;
const Cell = styled.td`
  height: 18px;
  padding: 0 0 0 7px;
  white-space: nowrap;
`;
const SignalCell = styled.td`
  padding: 0 4px 0 0;
  text-align: right;
`;
const Entry = styled.label`
  display: flex;
  align-items: center;
  height: 18px;
`;
const Tick = styled.input`
  appearance: none;
  flex: none;
  width: 13px;
  height: 13px;
  background: #fff;
  border: 1px solid #333;
`;
const BandName = styled.strong`
  margin-left: 8px;
  font-size: 12px;
  font-weight: 700;
`;
const IconSlot = styled.span`
  margin: 0 5px 0 4px;
`;
const Spacer = styled.span`
  flex: 1;
`;
const ListScroll = styled.div`
  display: flex;
  height: 16px;
  background: #f0f0f0;
`;
const ScrollButton = styled.button`
  display: grid;
  place-items: center;
  width: 17px;
  height: 16px;
`;
const Thumb = styled.span`
  width: 65px;
  background: #cdcdcd;
`;

const Splitter = styled.div`
  display: flex;
  flex-direction: column;
  width: ${(props) => (props.$right ? 8 : 7)}px;
  padding-top: 257px;
  background: linear-gradient(to right, ${(props) => (props.$right ? "#f4f4f4, #b4b4b4" : "#b0b0b0, #e8e8e8")});
`;
const SplitHandle = styled.span`
  display: flex;
  flex-direction: column;
  height: 100px;
  &::before,
  &::after {
    content: "";
    margin-left: 2px;
    border: solid transparent;
    border-width: 4px 4px 4px 0;
    border-right-color: #8a8a8a;
    width: 0;
  }
`;
const SplitDots = styled.span`
  flex: 1;
  width: 5px;
  margin: 3px 0 3px 2px;
  background: radial-gradient(#a4a4a4 1px, transparent 1px) 0 0 / 3px 3px;
`;

const Content = styled.div`
  display: flex;
  flex-direction: column;
  flex: 1;
  min-width: 0;
`;
const SpectrumRow = styled.section`
  display: flex;
`;
const SideTab = styled.div`
  display: flex;
  flex-direction: column;
  align-items: center;
  justify-content: space-between;
  width: 27px;
  padding: 9px 0 5px;
  border-right: 1px solid #a0a0a0;
`;
const SideTabTitle = styled.span`
  writing-mode: vertical-rl;
`;
const SideTabClose = styled.button`
  padding: 1px;
`;
const Charts = styled.div`
  flex: 1;
  min-width: 0;
  background: #021a2b;
`;
const ChartSvg = styled.svg`
  width: 100%;
`;
const ChartText = styled.text`
  font: 11px "DejaVu Sans Condensed", "DejaVu Sans", sans-serif;
  font-stretch: condensed;
  fill: #a0b8dc;
`;
const AxisTitle = styled(ChartText)`
  font-size: 10px;
  text-anchor: middle;
`;
const RowSplitter = styled.div`
  height: 8px;
  background: linear-gradient(#ececec, #b2b2b2);
`;
const RulerRow = styled.div`
  display: flex;
  height: 24px;
`;
const RulerCorner = styled.span`
  width: 25px;
`;
const RulerSvg = styled.svg`
  flex: 1;
  min-width: 0;
  height: 24px;
  background: linear-gradient(#fff 30%, #dcdcdc);
`;
const RulerText = styled.text`
  font: 11px "Open Sans", sans-serif;
  fill: ${(props) => (props.$faint ? "#b4b4b4" : "#111")};
`;
const MapRow = styled.section`
  display: flex;
  flex: 1;
`;
const SideRulerBox = styled.div`
  width: 25px;
  background: linear-gradient(to right, #fff 30%, #dcdcdc);
`;
const MapColumn = styled.div`
  display: flex;
  flex-direction: column;
  flex: 1;
  min-width: 0;
`;
const MapView = styled.div`
  display: flex;
  flex: 1;
`;
const Canvas = styled.div`
  position: relative;
  flex: 1;
  min-width: 0;
  padding: 19px 0 19px 191px;
  overflow: hidden;
`;
const BackdropSvg = styled.svg`
  position: absolute;
  inset: 0;
  width: 100%;
  height: 100%;
`;
const PlanSvg = styled.svg`
  position: relative;
  width: 369px;
  height: 236px;
  outline: 1px solid #55606c;
  outline-offset: -1px;
  box-shadow: 2px 2px 6px 1px rgba(10, 30, 60, 0.7);
`;
const PlanText = styled.text`
  font: 13px "Liberation Sans", sans-serif;
  text-anchor: middle;
  fill: #333;
`;
const SuiteText = styled.text`
  font: 11px "Liberation Sans", sans-serif;
  fill: #222;
`;
const MapScrollY = styled.div`
  display: flex;
  flex-direction: column;
  width: 17px;
`;
const MapScrollX = styled.div`
  display: flex;
  height: 17px;
`;
const ScrollCorner = styled.span`
  width: 17px;
  padding: 6px 0 0 6px;
`;

const StatusBar = styled.footer`
  display: flex;
  height: 36px;
  border-top: 1px solid #c8c8c8;
`;
const StatusItem = styled.div`
  display: flex;
  align-items: center;
  gap: 5px;
  flex: ${(props) => (props.$grow ? 1 : "none")};
  width: ${(props) => props.$width}px;
  padding: 0 0 2px ${(props) => (props.$grow ? 2 : 4)}px;
  border-left: ${(props) => (props.$grow ? 0 : 1)}px solid #d8d8d8;
  white-space: nowrap;
  &:last-child {
    position: relative;
    padding-left: 6px;
  }
`;
const ZoomItem = styled(StatusItem)`
  width: 98px;
  padding-left: 14px;
`;
const ZoomButton = styled.button`
  display: flex;
  align-items: center;
  gap: 14px;
`;
const MicItem = styled.div`
  display: grid;
  place-items: center;
  width: 46px;
  margin: 3px 0;
  border-left: 1px solid #8a8a8a;
`;
const GripCorner = styled.span`
  position: absolute;
  right: 3px;
  bottom: 1px;
`;
